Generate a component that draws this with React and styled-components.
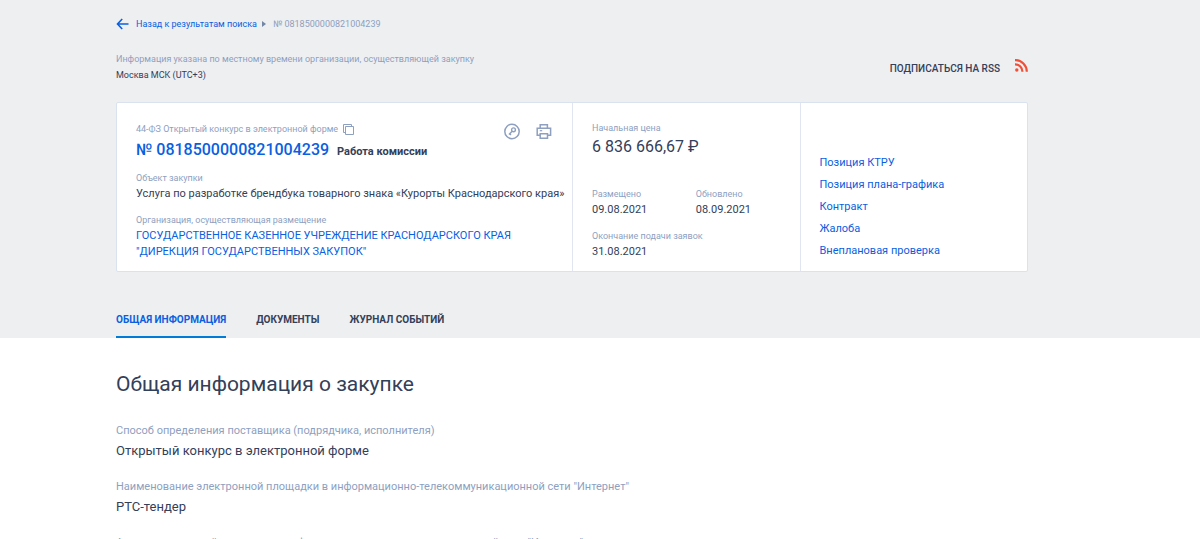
import React from "react";
import styled, { createGlobalStyle } from "styled-components";

const GlobalStyle = createGlobalStyle`
  *, *::before, *::after { box-sizing: border-box; }
  body {
    margin: 0;
    background: #fff;
    color: #334059;
    font-family: Roboto, "Liberation Sans", sans-serif;
    font-size: 11px;
    line-height: 16px;
  }
  h1, h2, p, ul, dl, dd { margin: 0; padding: 0; }
  ul { list-style: none; }
`;

const gutters = "padding-left: 116px; padding-right: 172px;";
const muted = "#8e9fbf";
const blue = "#0a60e0";

const TopArea = styled.header`
  ${gutters}
  background: #eeeff1;
  padding-top: 16px;
`;

const Link = styled.a`
  color: ${blue};
  text-decoration: none;
`;

const Breadcrumbs = styled.nav`
  display: flex;
  align-items: center;
  font-size: 9px;
  color: ${muted};
`;

const BackLink = styled(Link)`
  display: flex;
  align-items: center;
  gap: 7px;
`;

const Separator = styled.svg`
  margin: 0 7px 0 5px;
`;

const InfoRow = styled.div`
  display: flex;
  justify-content: space-between;
  align-items: flex-start;
  margin-top: 19px;
`;

const TimeZone = styled.div`
  font-size: 9px;
  color: ${({ $label }) => ($label ? muted : "#334059")};
`;

const RssLink = styled(Link)`
  display: flex;
  align-items: flex-start;
  gap: 15px;
  padding-top: 8px;
  color: #334059;
  font-size: 10px;
  line-height: 20px;
  font-weight: 500;
`;

const Card = styled.section`
  display: grid;
  grid-template-columns: 2fr 1fr 1fr;
  margin-top: 19px;
  background: #fff;
  border: 1px solid #dbe2ef;
  border-radius: 2px;
  min-height: 170px;
`;

const Column = styled.div`
  padding: 18px 0 9px 19px;
  & + & { border-left: 1px solid #e0e5f1; }
`;

const CardHead = styled.div`
  display: flex;
  justify-content: space-between;
  align-items: flex-start;
`;

const Kind = styled.div`
  display: flex;
  align-items: center;
  gap: 5px;
  font-size: 9px;
  color: ${muted};
`;

const NumberLine = styled.div`
  display: flex;
  align-items: baseline;
  gap: 8px;
  line-height: 26px;
`;

const PurchaseNumber = styled(Link)`
  font-size: 16px;
  font-weight: 500;
`;

const Stage = styled.span`
  font-weight: 700;
`;

const Tools = styled.div`
  display: flex;
  gap: 16px;
  padding: 2px 20px 0 0;
`;

const IconButton = styled.button`
  display: flex;
  padding: 0;
  border: 0;
  background: none;
  color: ${muted};
  cursor: pointer;
`;

const Block = styled.div`
  margin-top: ${({ $gap = 11 }) => $gap}px;
`;

const Label = styled.div`
  font-size: 9px;
  line-height: 15px;
  color: ${muted};
`;

const Value = styled.div`
  max-width: 434px;
`;

const Price = styled.div`
  font-size: 16px;
  line-height: 22px;
`;

const Dates = styled.div`
  display: grid;
  grid-template-columns: 1fr 1fr;
  margin-top: 29px;
`;

const LinkList = styled.ul`
  padding-top: 31px;
  line-height: 22px;
`;

const Tabs = styled.nav`
  display: flex;
  gap: 30px;
  margin-top: 40px;
`;

const Tab = styled.a`
  padding-bottom: 8px;
  border-bottom: 2px solid ${({ $active }) => ($active ? "#007bd9" : "transparent")};
  color: ${({ $active }) => ($active ? blue : "#334059")};
  font-size: 10px;
  font-weight: 700;
  text-decoration: none;
  text-transform: uppercase;
`;

const Content = styled.main`
  ${gutters}
  padding-top: 32px;
`;

const Title = styled.h1`
  font-size: 21px;
  line-height: 28px;
  font-weight: 400;
`;

const Fields = styled.dl`
  margin-top: 24px;
  display: grid;
  gap: 16px;
`;

const FieldLabel = styled.dt`
  line-height: 18px;
  color: ${muted};
`;

const FieldValue = styled.dd`
  font-size: 13px;
  line-height: 22px;
`;

const relatedLinks = ["Позиция КТРУ", "Позиция плана-графика", "Контракт", "Жалоба", "Внеплановая проверка"];

const tabs = ["Общая информация", "Документы", "Журнал событий"];

const fields = [
  ["Способ определения поставщика (подрядчика, исполнителя)", "Открытый конкурс в электронной форме"],
  ['Наименование электронной площадки в информационно-телекоммуникационной сети "Интернет"', "РТС-тендер"],
  ['Адрес электронной площадки в информационно-телекоммуникационной сети "Интернет"', "http://www.rts-tender.ru"],
];

const ArrowIcon = () => (
  <svg width="13" height="12" viewBox="0 0 13 12" fill="none" stroke={blue} strokeWidth="1.6" aria-hidden="true">
    <path d="M12.5 6H2M6.2 1 1.5 6l4.7 5" />
  </svg>
);

const RssIcon = () => (
  <svg width="13" height="13" viewBox="0 0 13 13" fill="none" stroke="#ee5138" strokeWidth="2.2" aria-hidden="true">
    <circle cx="1.8" cy="11" r="1.7" fill="#ee5138" stroke="none" />
    <path d="M0 5.3a7.2 7.2 0 0 1 7.4 7.5M0 1.1a11.5 11.5 0 0 1 11.8 11.7" />
  </svg>
);

const CopyIcon = () => (
  <svg width="11" height="11" viewBox="0 0 11 11" fill="none" stroke="currentColor" aria-hidden="true">
    <path d="M2.5 2.5h8v8h-8zM2.5 8.5h-2v-8h8v2" />
  </svg>
);

const KeyIcon = () => (
  <svg width="16" height="17" viewBox="0 0 16 17" fill="none" stroke="currentColor" strokeWidth="1.5" aria-hidden="true">
    <circle cx="8" cy="8.5" r="7.2" />
    <circle cx="9.5" cy="6.8" r="1.9" strokeWidth="1.4" />
    <path d="M8.2 8.2 4.9 11.5M5.3 10.2l1.7 1.7" strokeWidth="1.4" />
  </svg>
);

const PrintIcon = () => (
  <svg width="16" height="17" viewBox="0 0 16 17" fill="none" stroke="currentColor" strokeWidth="1.5" aria-hidden="true">
    <path d="M4.2 5.2V1.8h7.2v3.4M4.2 12.2H1.2v-7h13.4v7h-3.1" />
    <path d="M4.2 10.8h7.3v4.4H4.2z" />
    <path d="M3.8 7.7h2.4" strokeWidth="1.2" />
  </svg>
);

export default function App() {
  return (
    <>
      <GlobalStyle />
      <TopArea>
        <Breadcrumbs>
          <BackLink href="#search">
            <ArrowIcon />
            Назад к результатам поиска
          </BackLink>
          <Separator width="4" height="6" viewBox="0 0 4 6" fill="#7486a8" aria-hidden="true">
            <path d="M0 0 4 3 0 6z" />
          </Separator>
          <span>№ 0818500000821004239</span>
        </Breadcrumbs>

        <InfoRow>
          <div>
            <TimeZone $label>Информация указана по местному времени организации, осуществляющей закупку</TimeZone>
            <TimeZone>Москва МСК (UTC+3)</TimeZone>
          </div>
          <RssLink href="#rss">
            ПОДПИСАТЬСЯ НА RSS
            <RssIcon />
          </RssLink>
        </InfoRow>

        <Card>
          <Column>
            <CardHead>
              <div>
                <Kind>
                  44-ФЗ Открытый конкурс в электронной форме
                  <IconButton type="button" aria-label="Копировать">
                    <CopyIcon />
                  </IconButton>
                </Kind>
                <NumberLine>
                  <PurchaseNumber href="#purchase">№ 0818500000821004239</PurchaseNumber>
                  <Stage>Работа комиссии</Stage>
                </NumberLine>
              </div>
              <Tools>
                <IconButton type="button" aria-label="Электронная подпись">
                  <KeyIcon />
                </IconButton>
                <IconButton type="button" aria-label="Печать">
                  <PrintIcon />
                </IconButton>
              </Tools>
            </CardHead>
            <Block $gap={6}>
              <Label>Объект закупки</Label>
              <Value>Услуга по разработке брендбука товарного знака «Курорты Краснодарского края»</Value>
            </Block>
            <Block>
              <Label>Организация, осуществляющая размещение</Label>
              <Value>
                <Link href="#organization">
                  ГОСУДАРСТВЕННОЕ КАЗЕННОЕ УЧРЕЖДЕНИЕ КРАСНОДАРСКОГО КРАЯ "ДИРЕКЦИЯ ГОСУДАРСТВЕННЫХ ЗАКУПОК"
                </Link>
              </Value>
            </Block>
          </Column>

          <Column>
            <Label>Начальная цена</Label>
            <Price>6 836 666,67 ₽</Price>
            <Dates>
              <div>
                <Label>Размещено</Label>
                <Value>09.08.2021</Value>
              </div>
              <div>
                <Label>Обновлено</Label>
                <Value>08.09.2021</Value>
              </div>
            </Dates>
            <Block>
              <Label>Окончание подачи заявок</Label>
              <Value>31.08.2021</Value>
            </Block>
          </Column>

          <Column>
            <LinkList>
              {relatedLinks.map((text) => (
                <li key={text}>
                  <Link href="#related">{text}</Link>
                </li>
              ))}
            </LinkList>
          </Column>
        </Card>

        <Tabs>
          {tabs.map((text, i) => (
            <Tab key={text} href="#tab" $active={i === 0}>
              {text}
            </Tab>
          ))}
        </Tabs>
      </TopArea>

      <Content>
        <Title>Общая информация о закупке</Title>
        <Fields>
          {fields.map(([label, value]) => (
            <div key={label}>
              <FieldLabel>{label}</FieldLabel>
              <FieldValue>{value}</FieldValue>
            </div>
          ))}
        </Fields>
      </Content>
    </>
  );
}
